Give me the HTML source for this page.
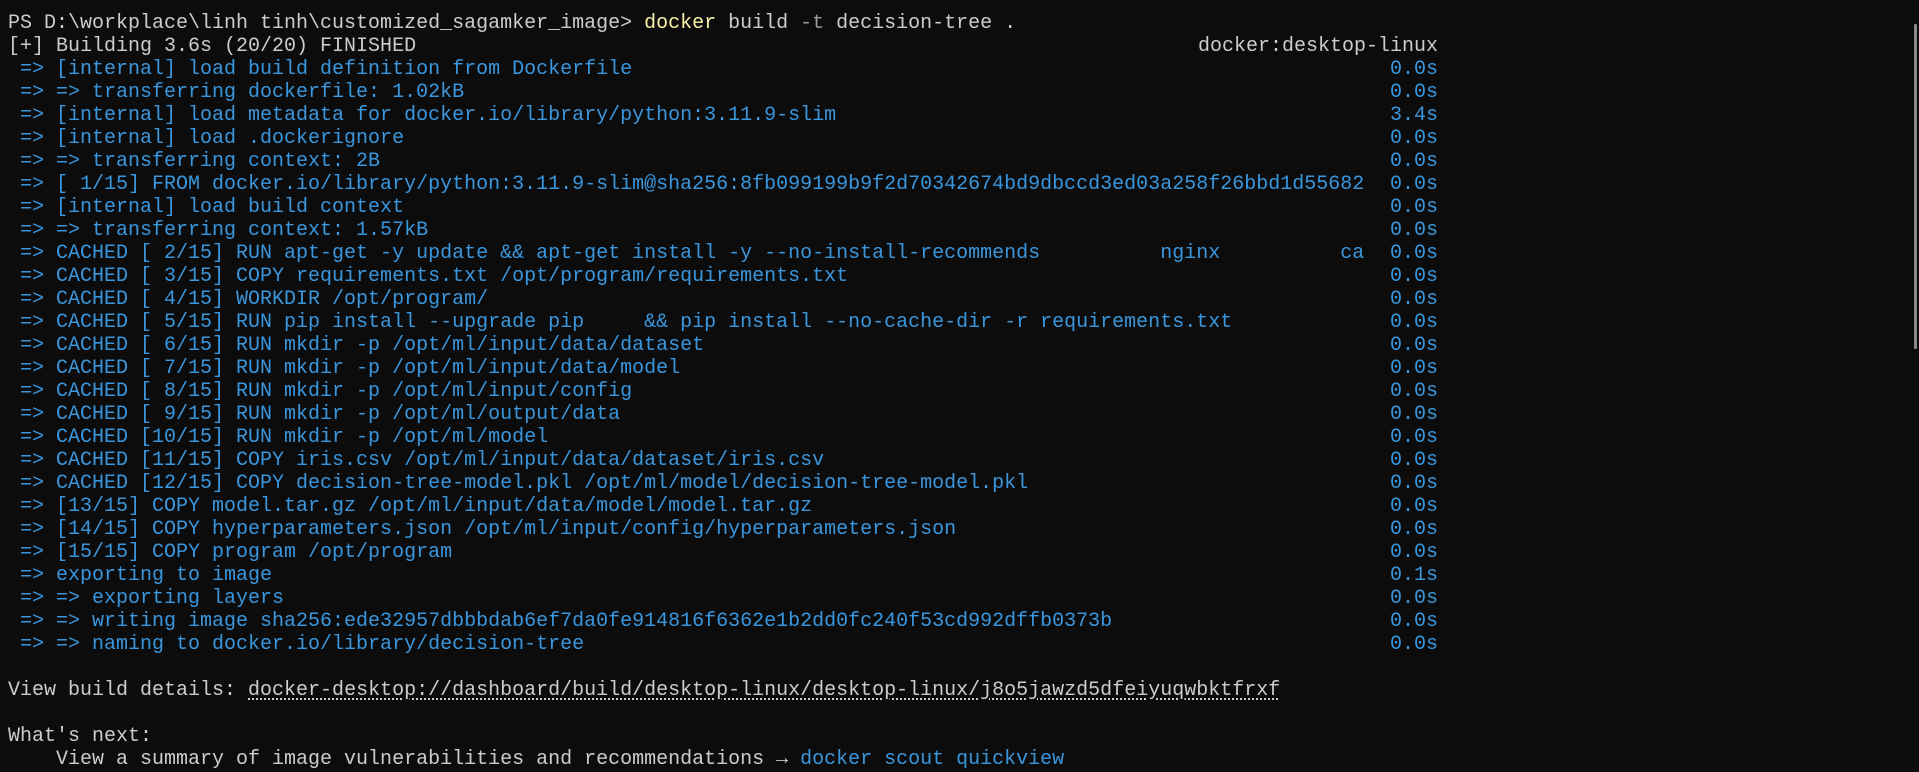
<!DOCTYPE html>
<html><head><meta charset="utf-8"><style>
html,body{margin:0;padding:0;background:#0c0c0c;width:1919px;height:772px;overflow:hidden}
#t{position:absolute;left:8px;top:12px;font-family:"Liberation Mono",monospace;font-size:20px;color:#cccccc}
.l{position:relative;height:23px;line-height:23px;width:1430px;white-space:pre}
.b{color:#3a96dd}
.y{color:#f9f1a5}
.g{color:#9a9a9a}
.r{position:absolute;right:0;top:0}
.u{text-decoration:underline dotted;text-underline-offset:3px}
#sb{position:absolute;left:1914px;top:24px;width:3px;height:325px;background:#8a8a8a;border-radius:1px}
</style></head><body>
<div id="t"><div class="l">PS D:\workplace\linh tinh\customized_sagamker_image&gt; <span class="y">docker</span> build <span class="g">-t</span> decision-tree .</div><div class="l">[+] Building 3.6s (20/20) FINISHED<span class="r">docker:desktop-linux</span></div><div class="l b"> =&gt; [internal] load build definition from Dockerfile<span class="r">0.0s</span></div><div class="l b"> =&gt; =&gt; transferring dockerfile: 1.02kB<span class="r">0.0s</span></div><div class="l b"> =&gt; [internal] load metadata for docker.io/library/python:3.11.9-slim<span class="r">3.4s</span></div><div class="l b"> =&gt; [internal] load .dockerignore<span class="r">0.0s</span></div><div class="l b"> =&gt; =&gt; transferring context: 2B<span class="r">0.0s</span></div><div class="l b"> =&gt; [ 1/15] FROM docker.io/library/python:3.11.9-slim@sha256:8fb099199b9f2d70342674bd9dbccd3ed03a258f26bbd1d55682<span class="r">0.0s</span></div><div class="l b"> =&gt; [internal] load build context<span class="r">0.0s</span></div><div class="l b"> =&gt; =&gt; transferring context: 1.57kB<span class="r">0.0s</span></div><div class="l b"> =&gt; CACHED [ 2/15] RUN apt-get -y update &amp;&amp; apt-get install -y --no-install-recommends          nginx          ca<span class="r">0.0s</span></div><div class="l b"> =&gt; CACHED [ 3/15] COPY requirements.txt /opt/program/requirements.txt<span class="r">0.0s</span></div><div class="l b"> =&gt; CACHED [ 4/15] WORKDIR /opt/program/<span class="r">0.0s</span></div><div class="l b"> =&gt; CACHED [ 5/15] RUN pip install --upgrade pip     &amp;&amp; pip install --no-cache-dir -r requirements.txt<span class="r">0.0s</span></div><div class="l b"> =&gt; CACHED [ 6/15] RUN mkdir -p /opt/ml/input/data/dataset<span class="r">0.0s</span></div><div class="l b"> =&gt; CACHED [ 7/15] RUN mkdir -p /opt/ml/input/data/model<span class="r">0.0s</span></div><div class="l b"> =&gt; CACHED [ 8/15] RUN mkdir -p /opt/ml/input/config<span class="r">0.0s</span></div><div class="l b"> =&gt; CACHED [ 9/15] RUN mkdir -p /opt/ml/output/data<span class="r">0.0s</span></div><div class="l b"> =&gt; CACHED [10/15] RUN mkdir -p /opt/ml/model<span class="r">0.0s</span></div><div class="l b"> =&gt; CACHED [11/15] COPY iris.csv /opt/ml/input/data/dataset/iris.csv<span class="r">0.0s</span></div><div class="l b"> =&gt; CACHED [12/15] COPY decision-tree-model.pkl /opt/ml/model/decision-tree-model.pkl<span class="r">0.0s</span></div><div class="l b"> =&gt; [13/15] COPY model.tar.gz /opt/ml/input/data/model/model.tar.gz<span class="r">0.0s</span></div><div class="l b"> =&gt; [14/15] COPY hyperparameters.json /opt/ml/input/config/hyperparameters.json<span class="r">0.0s</span></div><div class="l b"> =&gt; [15/15] COPY program /opt/program<span class="r">0.0s</span></div><div class="l b"> =&gt; exporting to image<span class="r">0.1s</span></div><div class="l b"> =&gt; =&gt; exporting layers<span class="r">0.0s</span></div><div class="l b"> =&gt; =&gt; writing image sha256:ede32957dbbbdab6ef7da0fe914816f6362e1b2dd0fc240f53cd992dffb0373b<span class="r">0.0s</span></div><div class="l b"> =&gt; =&gt; naming to docker.io/library/decision-tree<span class="r">0.0s</span></div><div class="l"> </div><div class="l">View build details: <span class="u">docker-desktop://dashboard/build/desktop-linux/desktop-linux/j8o5jawzd5dfeiyuqwbktfrxf</span></div><div class="l"> </div><div class="l">What's next:</div><div class="l">    View a summary of image vulnerabilities and recommendations → <span class="b">docker scout quickview</span></div></div>
<div id="sb"></div>
</body></html>
